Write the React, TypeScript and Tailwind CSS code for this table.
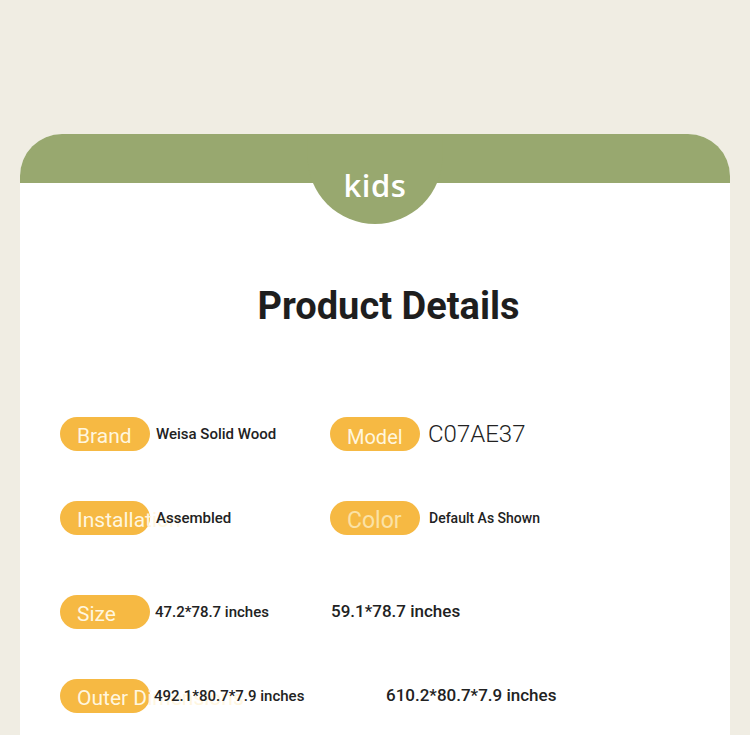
import React from "react";

const roboto = { fontFamily: "Roboto, 'Liberation Sans', sans-serif" };

function Pill({ label, faded, size = "text-[21px]" }: { label: string; faded?: boolean; size?: string }) {
  return (
    <div className="w-[90px] h-[34px] shrink-0 rounded-full bg-[#f6b943] flex items-center pl-[17px]">
      <span
        className={`whitespace-nowrap leading-none pt-[5px] ${size} ${faded ? "text-[#fbe2a6]" : "text-[#fff6df]"}`}
      >
        {label}
      </span>
    </div>
  );
}

export default function App() {
  return (
    <div className="w-[750px] h-[735px] overflow-hidden bg-[#f0ede3] pt-[134px] px-[20px]" style={roboto}>
      <div className="bg-white rounded-t-[42px] overflow-hidden h-[620px]">
        <div className="relative h-[49px] bg-[#98a86f]">
          <div className="absolute left-1/2 -translate-x-1/2 top-0 w-[135px] h-[90px] rounded-b-[67.5px] bg-[#98a86f] flex justify-center">
            <span
              className="mt-[36px] text-[31px] leading-none font-semibold text-white tracking-[0.5px]"
              style={{ fontFamily: "'Open Sans', 'Noto Sans', sans-serif" }}
            >
              kids
            </span>
          </div>
        </div>

        <div className="mt-[82px] h-[82px] flex items-center justify-center pl-[27px]">
          <h1 className="text-[38px] font-bold text-[#1e1e1e] leading-none">Product Details</h1>
        </div>

        <div className="mt-[70px] pl-[40px] flex flex-col">
          <div className="flex h-[34px]">
            <div className="w-[270px] flex items-center">
              <Pill label="Brand" />
              <span className="ml-[6px] text-[15px] font-medium text-[#222] whitespace-nowrap">Weisa Solid Wood</span>
            </div>
            <div className="flex items-center">
              <Pill label="Model" size="text-[20px]" />
              <span className="ml-[8px] text-[24px] font-light text-[#222] whitespace-nowrap">C07AE37</span>
            </div>
          </div>

          <div className="flex h-[34px] mt-[50px]">
            <div className="w-[270px] flex items-center">
              <Pill label="Installation" />
              <span className="ml-[6px] text-[15px] font-medium text-[#222] whitespace-nowrap">Assembled</span>
            </div>
            <div className="flex items-center">
              <Pill label="Color" faded size="text-[23px]" />
              <span className="ml-[9px] text-[14px] font-medium text-[#222] whitespace-nowrap">Default As Shown</span>
            </div>
          </div>

          <div className="flex h-[34px] mt-[60px]">
            <div className="w-[270px] flex items-center">
              <Pill label="Size" />
              <span className="ml-[5px] text-[15px] font-medium text-[#222] whitespace-nowrap">47.2*78.7 inches</span>
            </div>
            <div className="flex items-center">
              <span className="ml-[1px] text-[17px] font-medium text-[#222] whitespace-nowrap">59.1*78.7 inches</span>
            </div>
          </div>

          <div className="flex h-[34px] mt-[50px]">
            <div className="w-[270px] flex items-center">
              <Pill label="Outer Dimensions" />
              <span className="ml-[4px] text-[15px] font-medium text-[#222] whitespace-nowrap">492.1*80.7*7.9 inches</span>
            </div>
            <div className="flex items-center">
              <span className="ml-[56px] text-[17px] font-medium text-[#222] whitespace-nowrap">610.2*80.7*7.9 inches</span>
            </div>
          </div>
        </div>
      </div>
    </div>
  );
}
